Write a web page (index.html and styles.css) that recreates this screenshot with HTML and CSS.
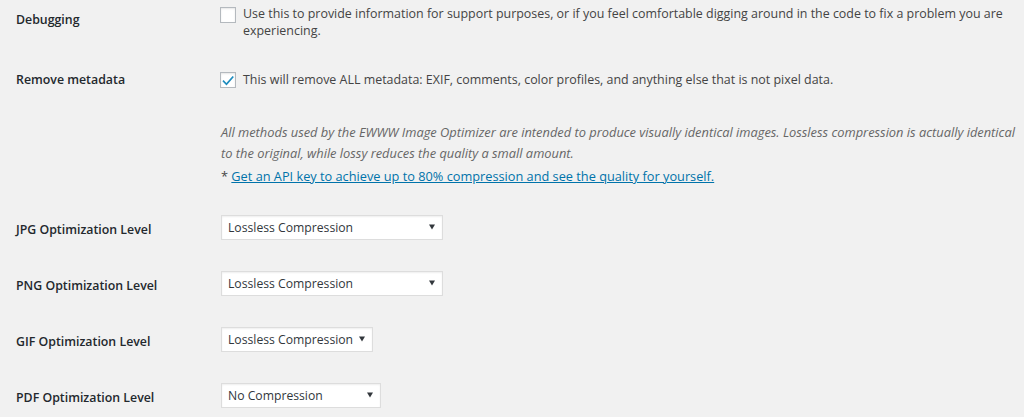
FILE: index.html
```html
<!DOCTYPE html>
<html lang="en">
<head>
<meta charset="utf-8">
<title>EWWW Image Optimizer settings</title>
<link rel="stylesheet" href="styles.css">
</head>
<body>
<div class="settings">
  <div class="row row-debug">
    <div class="label">Debugging</div>
    <div class="field">
      <span class="checkbox"></span>
      <span class="desc">Use this to provide information for support purposes, or if you feel comfortable digging around in the code to fix a problem you are experiencing.</span>
    </div>
  </div>

  <div class="row row-meta">
    <div class="label">Remove metadata</div>
    <div class="field">
      <span class="checkbox checked"><svg viewBox="0 0 16 16" width="16" height="16"><path d="M3.6 8.1 L6.4 11 L12.6 3.9 L13.9 5 L6.5 13.4 L2.4 9.2 Z" fill="#1e8cbe"/></svg></span>
      <span class="desc">This will remove ALL metadata: EXIF, comments, color profiles, and anything else that is not pixel data.</span>
    </div>
  </div>

  <div class="row row-note">
    <div class="label"></div>
    <div class="field-block">
      <p class="note">All methods used by the EWWW Image Optimizer are intended to produce visually identical images. Lossless compression is actually identical to the original, while lossy reduces the quality a small amount.</p>
      <p class="api">* <a href="#">Get an API key to achieve up to 80% compression and see the quality for yourself.</a></p>
    </div>
  </div>

  <div class="row row-select first">
    <div class="label">JPG Optimization Level</div>
    <div class="select wide"><span>Lossless Compression</span><svg class="arrow" viewBox="0 0 6 6" width="6" height="6"><path d="M0 0.5 H6 L3 5.5 Z" fill="#32373c"/></svg></div>
  </div>

  <div class="row row-select">
    <div class="label">PNG Optimization Level</div>
    <div class="select wide"><span>Lossless Compression</span><svg class="arrow" viewBox="0 0 6 6" width="6" height="6"><path d="M0 0.5 H6 L3 5.5 Z" fill="#32373c"/></svg></div>
  </div>

  <div class="row row-select">
    <div class="label">GIF Optimization Level</div>
    <div class="select gif"><span>Lossless Compression</span><svg class="arrow" viewBox="0 0 6 6" width="6" height="6"><path d="M0 0.5 H6 L3 5.5 Z" fill="#32373c"/></svg></div>
  </div>

  <div class="row row-select">
    <div class="label">PDF Optimization Level</div>
    <div class="select pdf"><span>No Compression</span><svg class="arrow" viewBox="0 0 6 6" width="6" height="6"><path d="M0 0.5 H6 L3 5.5 Z" fill="#32373c"/></svg></div>
  </div>
</div>
</body>
</html>
```

FILE: styles.css
```css
html, body {
  margin: 0;
  padding: 0;
  background: #f1f1f1;
}
body {
  font-family: "Open Sans", "Noto Sans", sans-serif;
  font-size: 12.45px;
  color: #444;
  overflow: hidden;
}
.settings {
  padding-left: 16px;
  padding-right: 6px;
}
.row {
  display: flex;
}
.label {
  width: 205px;
  flex: none;
  font-size: 12.35px;
  font-weight: 600;
  color: #23282d;
  line-height: 19px;
}
.field {
  display: flex;
  align-items: flex-start;
  line-height: 17px;
  min-width: 0;
  flex: 1;
  margin-left: -1px;
}
.checkbox {
  flex: none;
  width: 14px;
  height: 14px;
  border: 1px solid #b4b9be;
  background: #fff;
  box-shadow: inset 0 1px 2px rgba(0,0,0,.1);
  margin: 2px 7px 0 0;
  position: relative;
}
.checkbox svg {
  position: absolute;
  left: -1px;
  top: -1px;
}
.desc {
  color: #444;
}
.row-debug {
  padding-top: 5px;
}
.row-debug .label {
  padding-top: 5px;
}
.row-meta {
  margin-top: 32px;
}
.row-meta .label {
  line-height: 17px;
}
.row-meta .checkbox {
  margin-top: 1px;
}
.field-block {
  flex: 1;
  font-size: 12.75px;
}
.row-note {
  margin-top: 34px;
}
.note {
  margin: 0;
  font-size: 12.85px;
  font-style: italic;
  color: #666;
  line-height: 21px;
}
.api {
  margin: 2px 0 0;
  line-height: 21px;
  color: #444;
}
.api a {
  color: #0073aa;
  text-decoration: underline;
}
.row-select {
  align-items: center;
  margin-top: 31px;
}
.row-select.first {
  margin-top: 28px;
}
.row-select .label {
  padding-top: 3px;
}
.select {
  flex: none;
  box-sizing: border-box;
  height: 25px;
  font-size: 12.2px;
  background: #fff;
  border: 1px solid #ddd;
  box-shadow: inset 0 1px 2px rgba(0,0,0,.07);
  display: flex;
  align-items: center;
  justify-content: space-between;
  padding: 0 7px 0 6px;
  color: #32373c;
}
.select.wide { width: 222px; }
.select.gif { width: 152px; }
.select.pdf { width: 160px; }
.select .arrow {
  margin-top: -1px;
}
```
